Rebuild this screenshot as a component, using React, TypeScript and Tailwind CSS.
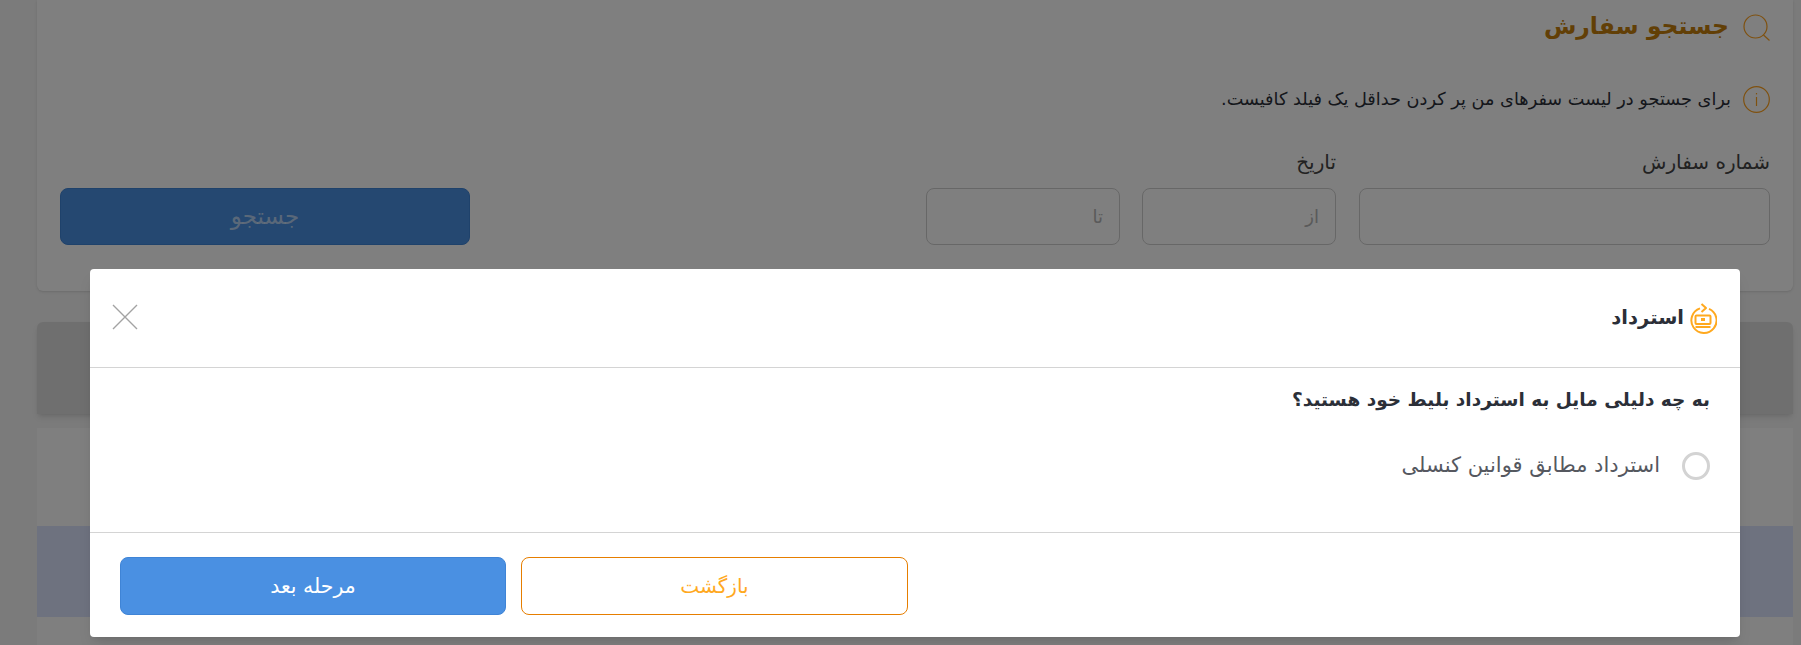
import React from 'react';

const FONT = "font-['DejaVu_Sans',sans-serif]";

const SearchIcon = () => (
  <svg width="27" height="27" viewBox="0 0 27 27" fill="none" stroke="#ffa21f" strokeWidth="1.2">
    <circle cx="12.5" cy="12.5" r="11.5" />
    <path d="M20.5 21 L26.5 26.5" />
  </svg>
);

const InfoIcon = () => (
  <svg width="27" height="27" viewBox="0 0 27 27" fill="none" stroke="#ffa21f" strokeWidth="1.2">
    <circle cx="13.5" cy="13.5" r="12.8" />
    <path d="M13.5 11 V20" />
    <path d="M13.5 7 V8.4" />
  </svg>
);

const RefundIcon = () => (
  <svg width="28" height="31" viewBox="0 0 28 31" fill="none" stroke="#ffa91f" strokeWidth="2">
    <path d="M11 5.4 A12.6 12.6 0 1 0 20 5.8" />
    <path d="M12.5 1 L17 5 L12.5 9" strokeLinejoin="round" />
    <rect x="6.5" y="12.5" width="15" height="8.5" rx="1" />
    <rect x="12" y="15" width="4" height="3" fill="#ffa91f" stroke="none" />
    <path d="M6.5 24 H21.5" />
  </svg>
);

const CloseIcon = () => (
  <svg width="26" height="26" viewBox="0 0 26 26" fill="none" stroke="#a3a3a3" strokeWidth="1.4">
    <path d="M1 1 L25 25 M25 1 L1 25" />
  </svg>
);

const Field = ({ className, placeholder }: { className: string; placeholder?: string }) => (
  <div className={`h-[57px] rounded-lg border border-[#cfcfcf] flex items-center px-4 text-[18px] text-[#b5b5b5] ${className}`}>
    {placeholder}
  </div>
);

export default function App() {
  return (
    <div dir="rtl" className={`relative w-[1801px] h-[645px] overflow-hidden bg-[#f6f6f6] pr-[8px] pl-[37px] ${FONT}`}>
      <div className="h-[291px] bg-white rounded-b-md shadow-sm px-[23px]">
        <div className="flex items-center gap-[14px] h-[54px] text-[#c47f0c] text-[23.5px] font-bold">
          <SearchIcon />
          <span>جستجو سفارش</span>
        </div>
        <div className="flex items-center gap-[12px] h-[27px] mt-[32px] text-[#2b2f38] text-[17.7px]">
          <InfoIcon />
          <span>برای جستجو در لیست سفرهای من پر کردن حداقل یک فیلد کافیست.</span>
        </div>
        <div className="flex items-end mt-[34px]">
          <div className="w-[411px] ml-[23px]">
            <div className="text-[20px] text-[#444] h-[30px] leading-[30px] mb-[11px]">شماره سفارش</div>
            <Field className="w-full" />
          </div>
          <div className="w-[410px] ml-[51px]">
            <div className="text-[20px] text-[#444] h-[30px] leading-[30px] mb-[11px]">تاریخ</div>
            <div className="flex gap-[22px]">
              <Field className="w-[194px]" placeholder="از" />
              <Field className="w-[194px]" placeholder="تا" />
            </div>
          </div>
          <div className="mr-[405px] w-[410px] h-[57px] rounded-lg bg-[#4a90e2] border border-[#3f84d6] flex items-center justify-center text-white/60 text-[23px] shrink-0">
            جستجو
          </div>
        </div>
      </div>

      <div className="h-[92px] mt-[31px] bg-[#dfdfdf] rounded-t-md shadow-md" />

      <div className="mt-[14px] bg-white">
        <div className="h-[98px]" />
        <div className="h-[91px] bg-[#dce4ff]" />
        <div className="h-[40px]" />
      </div>

      {/* backdrop */}
      <div className="absolute inset-0 bg-black/50" />

      {/* refund modal */}
      <div className="absolute left-[90px] top-[269px] w-[1650px] h-[368px] bg-white rounded-[4px] shadow-lg flex flex-col">
        <div className="h-[99px] shrink-0 border-b border-[#d4d4d4] flex items-center justify-between pr-[23px] pl-[22px]">
          <div className="flex items-center gap-[5px]">
            <RefundIcon />
            <span className="text-[19.5px] font-bold text-[#2b2f38]">استرداد</span>
          </div>
          <div className="-mt-[3px]">
            <CloseIcon />
          </div>
        </div>
        <div className="flex-1 pr-[30px] pt-[17px]">
          <div className="text-[18.5px] font-bold text-[#2b2f38] leading-[30px]">به چه دلیلی مایل به استرداد بلیط خود هستید؟</div>
          <div className="flex items-center gap-[22px] mt-[35px]">
            <div className="w-[28px] h-[28px] rounded-full border-[3px] border-[#d3d3d3]" />
            <span className="text-[21px] text-[#55585f]">استرداد مطابق قوانین کنسلی</span>
          </div>
        </div>
        <div className="h-[105px] shrink-0 border-t border-[#d4d4d4] flex items-start justify-end gap-[15px] pt-[24px] pl-[30px]">
          <button className="w-[387px] h-[58px] rounded-lg border border-[#e67e00] text-[#ffa91f] text-[20px] flex items-center justify-center">
            بازگشت
          </button>
          <button className="w-[386px] h-[58px] rounded-lg border border-[#3f84d6] bg-[#4a90e2] text-white text-[20.5px] flex items-center justify-center">
            مرحله بعد
          </button>
        </div>
      </div>
    </div>
  );
}
